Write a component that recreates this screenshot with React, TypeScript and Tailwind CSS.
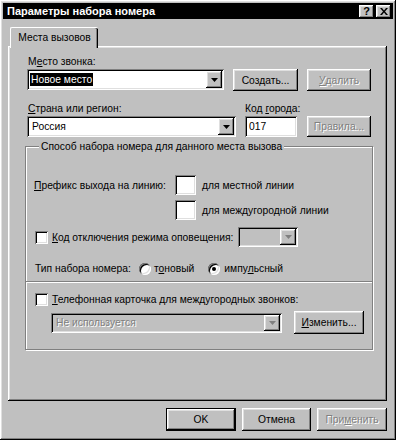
import React from "react"

const font = "font-['Liberation_Sans',Arial,sans-serif] text-[10.3px] leading-[13px]"
const raised =
  "shadow-[inset_-1px_-1px_#000,inset_1px_1px_#fff,inset_-2px_-2px_#808080,inset_2px_2px_#dfdfdf]"
const sunken =
  "shadow-[inset_1px_1px_#808080,inset_-1px_-1px_#fff,inset_2px_2px_#000,inset_-2px_-2px_#dfdfdf]"
const disabledText = "text-[#808080] [text-shadow:1px_1px_0_#fff]"

function Button({ children, className = "", disabled = false, isDefault = false }: { children: React.ReactNode; className?: string; disabled?: boolean; isDefault?: boolean }) {
  return (
    <div
      className={`flex items-center justify-center bg-[#c0c0c0] ${
        isDefault
          ? "shadow-[inset_0_0_0_1px_#000,inset_-2px_-2px_#000,inset_2px_2px_#fff,inset_-3px_-3px_#808080,inset_3px_3px_#dfdfdf]"
          : raised
      } ${disabled ? disabledText : "text-black"} ${className}`}
    >
      {children}
    </div>
  )
}

function Arrow({ disabled = false }: { disabled?: boolean }) {
  return (
    <div className={`flex h-full w-[16px] items-center justify-center bg-[#c0c0c0] ${raised}`}>
      <svg width="7" height="4" viewBox="0 0 7 4">
        <path d="M0 0h7L3.5 4z" fill={disabled ? "#808080" : "#000"} />
      </svg>
    </div>
  )
}

function Combo({ children, className = "", disabled = false }: { children?: React.ReactNode; className?: string; disabled?: boolean }) {
  return (
    <div className={`flex p-[2px] ${disabled ? "bg-[#c0c0c0]" : "bg-white"} ${sunken} ${className}`}>
      <div className={`flex flex-1 items-center pl-[1px] ${disabled ? disabledText : ""}`}>{children}</div>
      <Arrow disabled={disabled} />
    </div>
  )
}

function Check() {
  return <div className={`h-[13px] w-[13px] shrink-0 bg-white ${sunken}`} />
}

function Radio({ checked = false }: { checked?: boolean }) {
  return (
    <div className={`flex h-[12px] w-[12px] shrink-0 items-center justify-center rounded-full bg-white ${sunken}`}>
      {checked && <div className="h-[4px] w-[4px] rounded-full bg-black" />}
    </div>
  )
}

function U({ children }: { children: React.ReactNode }) {
  return <span className="underline underline-offset-[1px]">{children}</span>
}

export default function App() {
  return (
    <div className={`flex h-[440px] w-[396px] flex-col bg-[#c0c0c0] p-[3px] ${raised} ${font}`}>
      <div className="flex h-[16px] items-center justify-between bg-black pl-[4px] pr-[2px]">
        <span className="text-[11px] font-bold text-white">Параметры набора номера</span>
        <div className="flex gap-[2px]">
          <div className={`flex h-[13px] w-[15px] items-center justify-center bg-[#c0c0c0] text-[11px] font-bold ${raised}`}>?</div>
          <div className={`flex h-[13px] w-[15px] items-center justify-center bg-[#c0c0c0] ${raised}`}>
            <svg width="8" height="7" viewBox="0 0 8 7">
              <path d="M0 0h2l2 2.5L6 0h2L5 3.5 8 7H6L4 4.5 2 7H0l3-3.5z" fill="#000" />
            </svg>
          </div>
        </div>
      </div>

      <div className="ml-[7px] mt-[8px] flex">
        <div className="relative z-10 -mb-[2px] flex h-[21px] w-[88px] justify-center rounded-tl-[2px] rounded-tr-[2px] border-l border-t border-white bg-[#c0c0c0] pt-[3px] shadow-[inset_-1px_0_#000,inset_-2px_0_#808080]">
          Места вызовов
        </div>
      </div>

      <div className={`ml-[5px] flex h-[355px] w-[379px] flex-col bg-[#c0c0c0] pl-[19px] pt-[9px] ${raised}`}>
        <div className="pl-[1px]">
          М<U>е</U>сто звонка:
        </div>
        <div className="mt-[1px] flex items-start">
          <Combo className="h-[21px] w-[197px]">
            <span className="bg-black px-[1px] text-white">Новое место</span>
          </Combo>
          <Button className="ml-[9px] h-[22px] w-[65px]">Создать...</Button>
          <Button disabled className="ml-[9px] h-[22px] w-[64px]">
            <U>У</U>далить
          </Button>
        </div>

        <div className="mt-[11px] flex">
          <div className="w-[218px] pl-[1px]">
            <U>С</U>трана или регион:
          </div>
          <div>
            Код <U>г</U>орода:
          </div>
        </div>
        <div className="mt-[1px] flex">
          <Combo className="h-[21px] w-[209px]">
            <span className="pl-[2px]">Россия</span>
          </Combo>
          <div className={`ml-[9px] flex h-[21px] w-[52px] items-center bg-white pl-[4px] ${sunken}`}>017</div>
          <Button disabled className="ml-[10px] h-[21px] w-[64px]">
            Правила...
          </Button>
        </div>

        <fieldset className="-ml-[2px] mt-[3px] w-[347px] border border-[#808080] px-[8px] pb-[15px] shadow-[1px_1px_#fff,inset_1px_1px_#fff]">
          <legend className="ml-[5px] bg-[#c0c0c0] px-[2px]">Способ набора номера для данного места вызова</legend>

          <div className="mt-[22px] grid grid-cols-[135px_21px_auto] gap-x-[6px] gap-y-[5px]">
            <div className="flex items-center">
              <U>П</U>рефикс выхода на линию:
            </div>
            <div className={`h-[20px] bg-white ${sunken}`} />
            <div className="flex items-center">для местной линии</div>
            <div />
            <div className={`h-[20px] bg-white ${sunken}`} />
            <div className="flex items-center">для междугородной линии</div>
          </div>

          <div className="mt-[7px] flex items-center">
            <div className="ml-[1px]">
              <Check />
            </div>
            <span className="ml-[4px]">
              <U>К</U>од отключения режима оповещения:
            </span>
            <Combo disabled className="ml-[5px] h-[20px] w-[60px]" />
          </div>

          <div className="mt-[15px] flex items-center">
            <span className="ml-[1px]">Тип набора номера:</span>
            <div className="ml-[8px]">
              <Radio />
            </div>
            <span className="ml-[3px]">
              т<U>о</U>новый
            </span>
            <div className="ml-[14px]">
              <Radio checked />
            </div>
            <span className="ml-[4px]">
              импу<U>л</U>ьсный
            </span>
          </div>

          <div className="-mx-[8px] mt-[6px] h-[2px] border-t border-[#808080] bg-white" />

          <div className="mt-[10px] flex items-center">
            <div className="ml-[1px]">
              <Check />
            </div>
            <span className="ml-[4px]">
              <U>Т</U>елефонная карточка для междугородных звонков:
            </span>
          </div>

          <div className="mt-[5px] flex items-center">
            <Combo disabled className="ml-[17px] h-[20px] w-[231px]">
              <span className="pl-[2px]">Не используется</span>
            </Combo>
            <Button className="ml-[12px] h-[23px] w-[70px]">
              <U>И</U>зменить...
            </Button>
          </div>
        </fieldset>
      </div>

      <div className="mt-[7px] flex justify-end gap-[6px] pr-[6px]">
        <Button isDefault className="h-[23px] w-[70px]">
          OK
        </Button>
        <Button className="h-[23px] w-[69px]">Отмена</Button>
        <Button disabled className="h-[23px] w-[70px]">
          При<U>м</U>енить
        </Button>
      </div>
    </div>
  )
}
